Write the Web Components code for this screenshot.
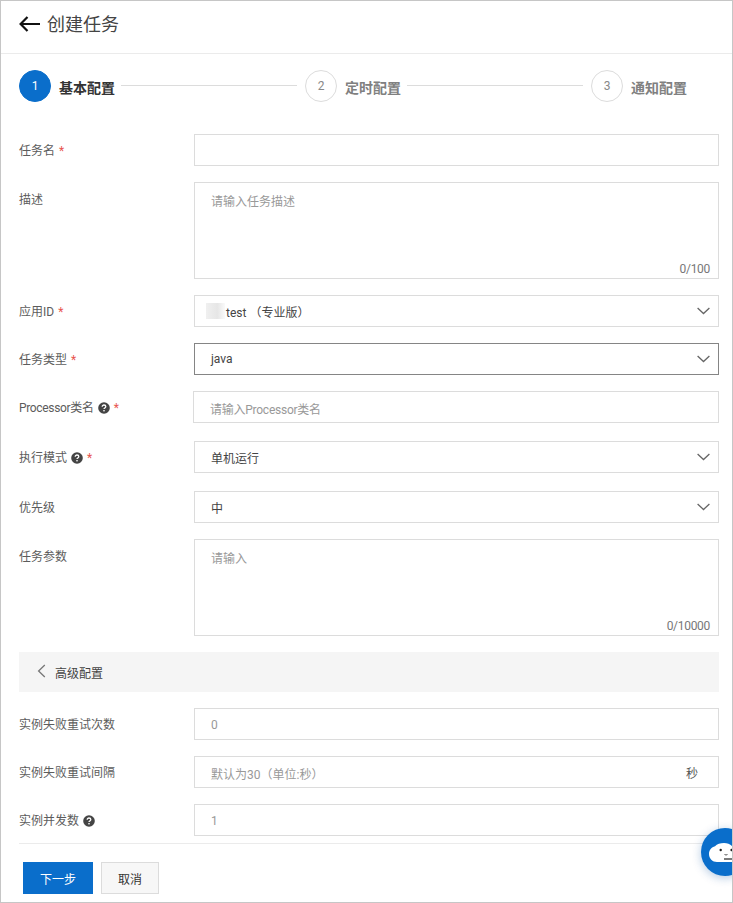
<!DOCTYPE html>
<html lang="zh">
<head>
<meta charset="utf-8">
<title>创建任务</title>
<style>
  html,body{margin:0;height:903px;overflow:hidden;background:#fff;}
  body{font-family:Roboto,"Noto Sans CJK SC",sans-serif;font-size:12px;color:#333;}
</style>
</head>
<body>
<task-page>
  <page-header slot="header">创建任务</page-header>
  <step-bar slot="steps">
    <step-item num="1" active>基本配置</step-item>
    <step-item num="2">定时配置</step-item>
    <step-item num="3" last>通知配置</step-item>
  </step-bar>

  <form-row label="任务名" required><text-field></text-field></form-row>
  <form-row label="描述" top><area-field placeholder="请输入任务描述" count="0/100"></area-field></form-row>
  <form-row label="应用ID" required><select-field blur>test （专业版）</select-field></form-row>
  <form-row label="任务类型" required><select-field focused>java</select-field></form-row>
  <form-row label="Processor类名" required help shift gap="18"><text-field latin placeholder="请输入Processor类名"></text-field></form-row>
  <form-row label="执行模式" required help gap="18"><select-field>单机运行</select-field></form-row>
  <form-row label="优先级"><select-field>中</select-field></form-row>
  <form-row label="任务参数" top><area-field placeholder="请输入" count="0/10000"></area-field></form-row>
  <advanced-bar>高级配置</advanced-bar>
  <form-row label="实例失败重试次数"><text-field placeholder="0"></text-field></form-row>
  <form-row label="实例失败重试间隔"><text-field placeholder="默认为30（单位:秒）" suffix="秒"></text-field></form-row>
  <form-row label="实例并发数" help gap="0"><text-field placeholder="1"></text-field></form-row>

  <form-footer slot="footer">
    <ui-button primary>下一步</ui-button>
    <ui-button>取消</ui-button>
  </form-footer>
  <chat-fab slot="overlay"></chat-fab>
</task-page>

<script>
const HELP_SVG = `<svg width="12" height="12" viewBox="0 0 12 12" aria-hidden="true"><circle cx="6" cy="6" r="5.8" fill="#444"/><path d="M4.200 4.700c0-1.100.8-1.700 1.800-1.700s1.800.6 1.800 1.500c0 1.400-1.800 1.400-1.800 2.600" fill="none" stroke="#fff" stroke-width="1.300"/><rect x="5.300" y="8" width="1.400" height="1.400" fill="#fff"/></svg>`;

class TaskPage extends HTMLElement {
  constructor() {
    super();
    this.attachShadow({mode:'open'}).innerHTML = `
      <style>
        :host{display:block;position:relative;box-sizing:border-box;width:733px;height:903px;overflow:hidden;border:1px solid #c6c6c6;background:#fff;}
        #steps{display:block;padding:16px 18px 0;}
        #form{display:flex;flex-direction:column;padding:32px 13px 0 18px;}
      </style>
      <slot name="header"></slot>
      <div id="steps"><slot name="steps"></slot></div>
      <div id="form"><slot></slot></div>
      <slot name="footer"></slot>
      <slot name="overlay"></slot>`;
  }
}

class PageHeader extends HTMLElement {
  constructor() {
    super();
    this.attachShadow({mode:'open'}).innerHTML = `
      <style>
        :host{display:flex;align-items:center;box-sizing:border-box;height:53px;padding-left:18px;border-bottom:1px solid #ebebeb;gap:7px;}
        svg{flex:none;}
        span{font-size:18px;color:#444;line-height:50px;margin-top:-4px;}
      </style>
      <svg width="21" height="16" viewBox="0 0 21 16" style="margin-top:-6px"><path d="M8.500 1 1.600 8l6.900 7M2 8h19" fill="none" stroke="#111" stroke-width="2.200"/></svg>
      <span><slot></slot></span>`;
  }
}

class StepBar extends HTMLElement {
  constructor() {
    super();
    this.attachShadow({mode:'open'}).innerHTML = `
      <style>:host{display:flex;height:32px;}</style><slot></slot>`;
  }
}

class StepItem extends HTMLElement {
  constructor() {
    super();
    this.attachShadow({mode:'open'}).innerHTML = `
      <style>
        :host{display:flex;align-items:center;flex:0 0 286px;height:32px;color:#808080;}
        :host([last]){flex:1;}
        :host([active]){color:#333;}
        #num{box-sizing:border-box;width:32px;height:32px;border-radius:50%;border:1px solid #dcdcdc;display:flex;align-items:center;justify-content:center;font-size:12px;color:#888;flex:none;background:#fff;}
        :host([active]) #num{background:#0a6ecb;border-color:#0a6ecb;color:#fff;}
        #txt{margin-left:8px;font-size:14px;font-weight:700;line-height:32px;margin-top:3px;white-space:nowrap;}
        #line{flex:1;height:1px;background:#dcdcdc;margin:0 8px 0 6px;transform:translateY(-1px);}
        :host([last]) #line{display:none;}
      </style>
      <div id="num"></div><div id="txt"><slot></slot></div><div id="line"></div>`;
    this.shadowRoot.getElementById('num').textContent = this.getAttribute('num');
  }
}

class FormRow extends HTMLElement {
  constructor() {
    super();
    const req = this.hasAttribute('required') ? '<i>*</i>' : '';
    const help = this.hasAttribute('help') ? `<b>${HELP_SVG}</b>` : '';
    this.attachShadow({mode:'open'}).innerHTML = `
      <style>
        :host{display:flex;align-items:center;margin-bottom:16px;}
        :host([top]){align-items:flex-start;}
        :host([top]) #lab{padding-top:8px;}
        #lab{flex:0 0 175px;display:flex;align-items:center;font-size:12px;color:#5c5c5c;line-height:18px;white-space:nowrap;transform:translateY(1px);}
        :host([shift]) #lab{flex-basis:174px;}
        :host([shift]) #name{letter-spacing:-.33px;}
        i{font-style:normal;color:#e8554e;margin-left:4px;font-size:12px;}
        b{display:inline-flex;margin-left:4px;font-weight:400;}
        #ctl{flex:1;min-width:0;}
      </style>
      <div id="lab"><span id="name"></span>${help}${req}</div>
      <div id="ctl"><slot></slot></div>`;
    this.shadowRoot.getElementById('name').textContent = this.getAttribute('label');
    if (this.hasAttribute('gap')) this.style.marginBottom = this.getAttribute('gap') + 'px';
  }
}

class TextField extends HTMLElement {
  constructor() {
    super();
    this.attachShadow({mode:'open'}).innerHTML = `
      <style>
        :host{display:flex;align-items:center;justify-content:space-between;box-sizing:border-box;height:32px;border:1px solid #dcdcdc;padding:0 20px 0 16px;font-size:12px;color:#999;background:#fff;}
        :host([latin]) #ph{letter-spacing:-.25px;}
        #ph{transform:translateY(.5px);}
        #suffix{color:#555;}
      </style>
      <span id="ph"></span><span id="suffix"></span>`;
    this.shadowRoot.getElementById('ph').textContent = this.getAttribute('placeholder') || '';
    this.shadowRoot.getElementById('suffix').textContent = this.getAttribute('suffix') || '';
  }
}

class AreaField extends HTMLElement {
  constructor() {
    super();
    this.attachShadow({mode:'open'}).innerHTML = `
      <style>
        :host{display:block;position:relative;box-sizing:border-box;height:97px;border:1px solid #dcdcdc;padding:10px 16px;font-size:12px;color:#999;line-height:18px;background:#fff;}
        #count{position:absolute;right:8px;bottom:0;color:#777;letter-spacing:-.3px;}
      </style>
      <div id="ph"></div><div id="count"></div>`;
    this.shadowRoot.getElementById('ph').textContent = this.getAttribute('placeholder');
    this.shadowRoot.getElementById('count').textContent = this.getAttribute('count');
  }
}

class SelectField extends HTMLElement {
  constructor() {
    super();
    this.attachShadow({mode:'open'}).innerHTML = `
      <style>
        :host{display:flex;align-items:center;box-sizing:border-box;height:32px;border:1px solid #dcdcdc;padding:0 8px 0 16px;font-size:12px;color:#444;background:#fff;}
        :host([focused]){border-color:#858585;}
        #val{flex:1;display:flex;align-items:center;white-space:pre;}
        #mask{display:none;width:19px;height:16px;margin-left:-5px;margin-right:1px;background:linear-gradient(90deg,#f0f0f0,#e6e6e6 60%,#fafafa);}
        :host([blur]) #mask{display:block;}
      </style>
      <div id="val"><span id="mask"></span><slot></slot></div>
      <svg width="13" height="8" viewBox="0 0 13 8"><path d="M.6 1l5.900 5.500L12.400 1" fill="none" stroke="#666" stroke-width="1.300"/></svg>`;
  }
}

class AdvancedBar extends HTMLElement {
  constructor() {
    super();
    this.attachShadow({mode:'open'}).innerHTML = `
      <style>
        :host{display:flex;align-items:center;height:40px;margin-bottom:16px;background:#f5f5f5;padding-left:18px;font-size:12px;color:#444;}
        svg{margin-right:9px;margin-top:-3px;}
      </style>
      <svg width="9" height="14" viewBox="0 0 9 14"><path d="M7.800 1 1.600 7l6.200 6" fill="none" stroke="#777" stroke-width="1.300"/></svg>
      <slot></slot>`;
  }
}

class FormFooter extends HTMLElement {
  constructor() {
    super();
    this.attachShadow({mode:'open'}).innerHTML = `
      <style>
        :host{display:flex;gap:8px;margin:7px 13px 0 18px;padding:18px 0 0 4px;border-top:1px solid #ebebeb;}
      </style><slot></slot>`;
  }
}

class UiButton extends HTMLElement {
  constructor() {
    super();
    this.attachShadow({mode:'open'}).innerHTML = `
      <style>
        :host{display:flex;align-items:center;justify-content:center;box-sizing:border-box;height:32px;width:58px;border:1px solid #dcdcdc;background:#f7f7f7;color:#333;font-size:12px;}
        :host([primary]){width:70px;background:#0a6ecb;border-color:#0a6ecb;color:#fff;}
      </style><slot></slot>`;
  }
}

class ChatFab extends HTMLElement {
  constructor() {
    super();
    this.attachShadow({mode:'open'}).innerHTML = `
      <style>
        :host{position:absolute;left:700px;top:827px;width:48px;height:48px;border-radius:50%;background:#0a6ecb;box-shadow:0 2px 10px rgba(10,80,160,.3);display:block;}
        svg{display:block;}
      </style>
      <svg width="48" height="48" viewBox="0 0 48 48">
        <path d="M16 34c-4.500 0-8-3.500-8-8 0-3.800 2.600-6.800 6-7.700C16 16 19.500 15 23 15c3.500 0 6.500 1.200 8.500 3.500H42V34z" fill="#fff"/>
        <circle cx="19.700" cy="22" r="1.200" fill="#222"/><circle cx="30.600" cy="22" r="1.200" fill="#222"/>
        <path d="M23.500 26.500q1.500 1 3 0" fill="none" stroke="#444" stroke-width=".9"/><path d="M23 31h10" stroke="#222" stroke-width="1.200"/>
      </svg>`;
  }
}

customElements.define('task-page', TaskPage);
customElements.define('page-header', PageHeader);
customElements.define('step-bar', StepBar);
customElements.define('step-item', StepItem);
customElements.define('form-row', FormRow);
customElements.define('text-field', TextField);
customElements.define('area-field', AreaField);
customElements.define('select-field', SelectField);
customElements.define('advanced-bar', AdvancedBar);
customElements.define('form-footer', FormFooter);
customElements.define('ui-button', UiButton);
customElements.define('chat-fab', ChatFab);
</script>
</body>
</html>
